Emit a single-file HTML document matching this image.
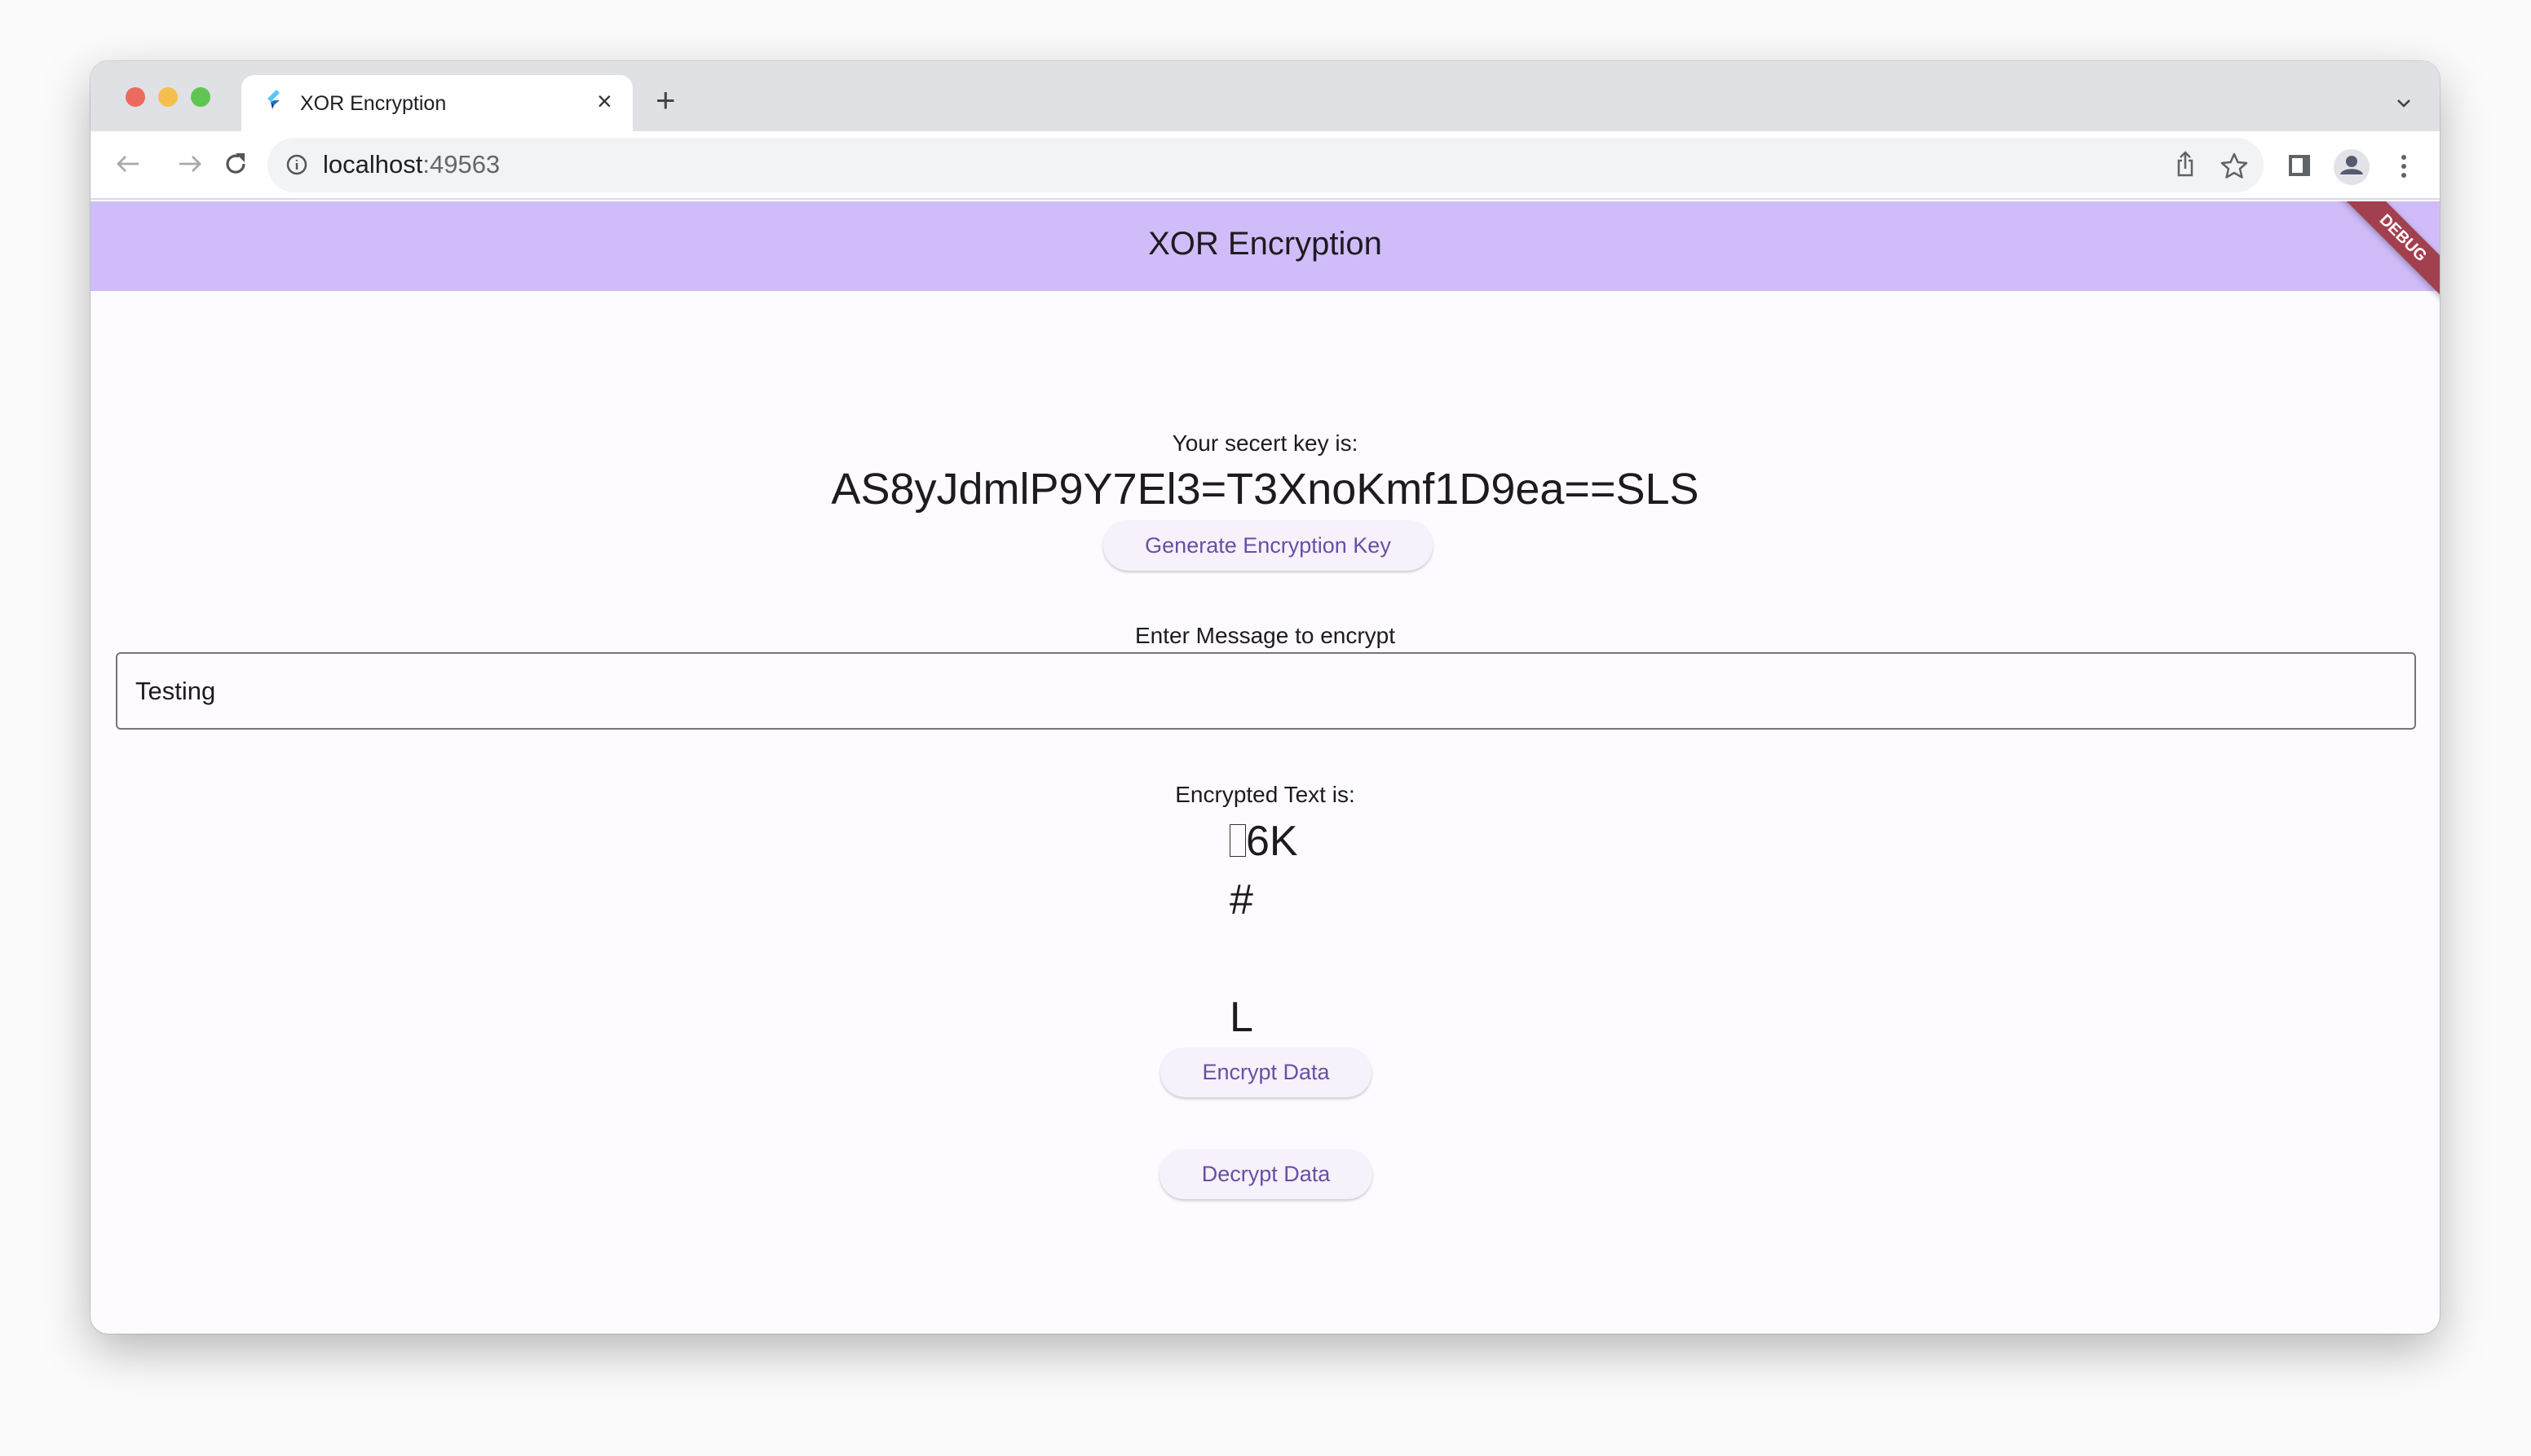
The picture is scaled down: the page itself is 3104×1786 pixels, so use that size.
<!DOCTYPE html>
<html><head><meta charset="utf-8"><style>
*{margin:0;padding:0;box-sizing:border-box}
body{width:3104px;height:1786px;background:#fbfbfb;font-family:"Liberation Sans",Arial,sans-serif;position:relative;overflow:hidden}
.win{position:absolute;left:111px;top:75px;width:2881px;height:1561px;border-radius:22px;background:#fdfbff;overflow:hidden;box-shadow:0 20px 60px rgba(0,0,0,.28),0 0 0 1px rgba(0,0,0,.12)}
.abs{position:absolute}
.c{position:absolute;left:0;width:100%;text-align:center;color:#1d1b20}
.btn{position:absolute;border-radius:40px;background:#f6f1fb;box-shadow:0 2px 3px rgba(0,0,0,.2);color:#6750a4;font-size:27px;display:flex;align-items:center;justify-content:center}
</style></head><body>
<div class="win">
 <div class="abs" style="left:0;top:0;width:100%;height:86px;background:#dfe1e5"></div>
 <div class="abs" style="left:43px;top:32px;width:24px;height:24px;border-radius:50%;background:#ed6a5e"></div>
 <div class="abs" style="left:83px;top:32px;width:24px;height:24px;border-radius:50%;background:#f5bf4f"></div>
 <div class="abs" style="left:123px;top:32px;width:24px;height:24px;border-radius:50%;background:#61c554"></div>
 <div class="abs" style="left:185px;top:17px;width:480px;height:72px;background:#fff;border-radius:16px 16px 0 0"></div>
 <svg class="abs" style="left:214px;top:33px" width="22" height="28" viewBox="0 0 22 28"><path d="M14 2L3 13l4 4L18 6z" fill="#5cc5f8"/><path d="M7 17l4 4 7-6h-7z" fill="#1f72c9"/><path d="M7 17l4 4-2 5z" fill="#0d3d86"/></svg>
 <div class="abs" style="left:257px;top:38px;font-size:25px;color:#202124">XOR Encryption</div>
 <div class="abs" style="left:621px;top:31px;font-size:32px;color:#333">×</div>
 <div class="abs" style="left:693px;top:24px;font-size:42px;color:#444">+</div>
 <svg class="abs" style="left:2825px;top:40px" width="24" height="24" viewBox="0 0 24 24"><path d="M5 8l7 7 7-7" stroke="#3c4043" stroke-width="2.5" fill="none"/></svg>
 <div class="abs" style="left:0;top:86px;width:100%;height:84px;background:#fff;border-bottom:2px solid #dadce0"></div>
 <svg class="abs" style="left:25px;top:110px" width="180" height="32" viewBox="0 0 180 32"><path d="M34 16H8M18 7l-9 9 9 9" stroke="#aaa" stroke-width="2.8" fill="none"/><path d="M84 16h26M100 7l9 9-9 9" stroke="#aaa" stroke-width="2.8" fill="none"/><path d="M157 7a10 10 0 1 0 6 9" stroke="#555" stroke-width="3.2" fill="none"/><path d="M153 3h11v11z" fill="#555"/></svg>
 <div class="abs" style="left:217px;top:94px;width:2448px;height:67px;border-radius:34px;background:#f1f3f4"></div>
 <svg class="abs" style="left:238px;top:112px" width="30" height="30" viewBox="0 0 30 30"><circle cx="15" cy="15" r="11" stroke="#555" stroke-width="2.5" fill="none"/><path d="M15 13v8M15 9v1.5" stroke="#555" stroke-width="2.5"/></svg>
 <div class="abs" style="left:285px;top:109px;font-size:31px;color:#202124">localhost<span style="color:#666">:49563</span></div>
 <svg class="abs" style="left:2549px;top:108px" width="380" height="44" viewBox="0 0 380 44"><path d="M16 14h-4v18h16V14h-4M20 24V4M14 10l6-6 6 6" stroke="#5f6368" stroke-width="2.5" fill="none"/><path d="M80 6l4.5 10 10.5 1-8 7 2.5 10.5-9.5-5.5-9.5 5.5 2.5-10.5-8-7 10.5-1z" stroke="#5f6368" stroke-width="2.5" fill="none" stroke-linejoin="round"/><rect x="147" y="7" width="26" height="26" fill="#5f6368"/><rect x="151" y="11" width="13" height="18" fill="#fff"/><circle cx="224" cy="22" r="22" fill="#e2e3e7"/><circle cx="224" cy="15" r="7" fill="#555a6e"/><path d="M210 31c2-9 26-9 28 0z" fill="#555a6e"/><circle cx="288" cy="10" r="3" fill="#5f6368"/><circle cx="288" cy="21" r="3" fill="#5f6368"/><circle cx="288" cy="32" r="3" fill="#5f6368"/></svg>
 <div class="abs" style="left:0;top:172px;width:100%;height:110px;background:#d0bcf9"></div>
 <div class="c" style="top:202px;font-size:40px">XOR Encryption</div>
 <div class="abs" style="left:0;top:172px;width:100%;height:200px;overflow:hidden">
  <div class="abs" style="left:2731px;top:28px;width:210px;height:34px;background:#a3404f;transform:rotate(45deg);color:#fff;font-size:20px;font-weight:bold;text-align:center;line-height:34px;box-shadow:0 2px 8px rgba(0,0,0,.3)">DEBUG</div>
 </div>
 <div class="c" style="top:453px;font-size:28px">Your secert key is:</div>
 <div class="c" style="top:494px;font-size:54px">AS8yJdmlP9Y7El3=T3XnoKmf1D9ea==SLS</div>
 <div class="btn" style="left:1242px;top:563px;width:404px;height:62px">Generate Encryption Key</div>
 <div class="c" style="top:689px;font-size:28px">Enter Message to encrypt</div>
 <div class="abs" style="left:31px;top:725px;width:2821px;height:95px;border:2px solid #79747e;border-radius:6px"></div>
 <div class="abs" style="left:55px;top:755px;font-size:31px;color:#1d1b20">Testing</div>
 <div class="c" style="top:884px;font-size:28px">Encrypted Text is:</div>
 <div class="abs" style="left:1397px;top:921px;font-size:52px;color:#1d1b20;line-height:72px"><span style="display:inline-block;width:20px;height:40px;border:1.5px solid #333;vertical-align:-2px"></span>6K<br>#<br><br>L</div>
 <div class="btn" style="left:1312px;top:1210px;width:259px;height:61px">Encrypt Data</div>
 <div class="btn" style="left:1311px;top:1335px;width:261px;height:61px">Decrypt Data</div>
</div>
</body></html>
